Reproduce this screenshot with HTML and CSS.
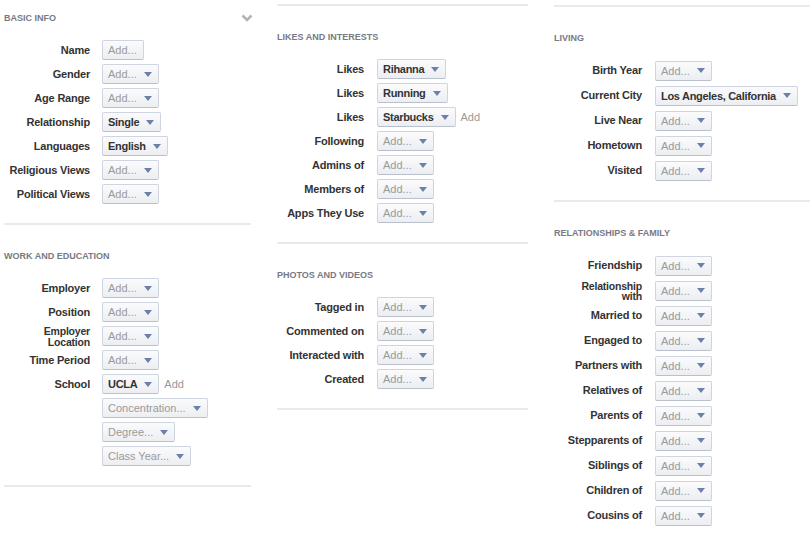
FILE: index.html
```html
<!DOCTYPE html>
<html lang="en">
<head>
    <meta charset="UTF-8">
    <title>Search Filters</title>
    <link rel="stylesheet" href="styles.css">
</head>
<body>
    <div class="columns">

        <!-- Column 1 -->
        <div class="column">
            <section class="section section--plain">
                <div class="section-title">
                    <span>Basic Info</span>
                    <svg class="chevron" width="12" height="8" viewBox="0 0 12 8"><polyline points="1.5,1.5 6,6 10.5,1.5" fill="none" stroke="#b4b4b4" stroke-width="2.6"/></svg>
                </div>
                <div class="row"><div class="label">Name</div><span class="btn"><span class="btn-text">Add...</span></span></div>
                <div class="row"><div class="label">Gender</div><span class="btn"><span class="btn-text">Add...</span><i class="arrow"></i></span></div>
                <div class="row"><div class="label">Age Range</div><span class="btn"><span class="btn-text">Add...</span><i class="arrow"></i></span></div>
                <div class="row"><div class="label">Relationship</div><span class="btn btn--set"><span class="btn-text">Single</span><i class="arrow"></i></span></div>
                <div class="row"><div class="label">Languages</div><span class="btn btn--set"><span class="btn-text">English</span><i class="arrow"></i></span></div>
                <div class="row"><div class="label">Religious Views</div><span class="btn"><span class="btn-text">Add...</span><i class="arrow"></i></span></div>
                <div class="row"><div class="label">Political Views</div><span class="btn"><span class="btn-text">Add...</span><i class="arrow"></i></span></div>
            </section>

            <section class="section">
                <div class="section-title"><span>Work and Education</span></div>
                <div class="row"><div class="label">Employer</div><span class="btn"><span class="btn-text">Add...</span><i class="arrow"></i></span></div>
                <div class="row"><div class="label">Position</div><span class="btn"><span class="btn-text">Add...</span><i class="arrow"></i></span></div>
                <div class="row"><div class="label label--two-line">Employer<br>Location</div><span class="btn"><span class="btn-text">Add...</span><i class="arrow"></i></span></div>
                <div class="row"><div class="label">Time Period</div><span class="btn"><span class="btn-text">Add...</span><i class="arrow"></i></span></div>
                <div class="row"><div class="label">School</div><span class="btn btn--set"><span class="btn-text">UCLA</span><i class="arrow"></i></span><a class="add-link">Add</a></div>
                <div class="row"><div class="label"></div><span class="btn"><span class="btn-text">Concentration...</span><i class="arrow"></i></span></div>
                <div class="row"><div class="label"></div><span class="btn"><span class="btn-text">Degree...</span><i class="arrow"></i></span></div>
                <div class="row"><div class="label"></div><span class="btn"><span class="btn-text">Class Year...</span><i class="arrow"></i></span></div>
            </section>
        </div>

        <!-- Column 2 -->
        <div class="column column--middle">
            <section class="section">
                <div class="section-title"><span>Likes and Interests</span></div>
                <div class="row"><div class="label">Likes</div><span class="btn btn--set"><span class="btn-text">Rihanna</span><i class="arrow"></i></span></div>
                <div class="row"><div class="label">Likes</div><span class="btn btn--set"><span class="btn-text">Running</span><i class="arrow"></i></span></div>
                <div class="row"><div class="label">Likes</div><span class="btn btn--set"><span class="btn-text">Starbucks</span><i class="arrow"></i></span><a class="add-link">Add</a></div>
                <div class="row"><div class="label">Following</div><span class="btn"><span class="btn-text">Add...</span><i class="arrow"></i></span></div>
                <div class="row"><div class="label">Admins of</div><span class="btn"><span class="btn-text">Add...</span><i class="arrow"></i></span></div>
                <div class="row"><div class="label">Members of</div><span class="btn"><span class="btn-text">Add...</span><i class="arrow"></i></span></div>
                <div class="row"><div class="label">Apps They Use</div><span class="btn"><span class="btn-text">Add...</span><i class="arrow"></i></span></div>
            </section>

            <section class="section">
                <div class="section-title"><span>Photos and Videos</span></div>
                <div class="row"><div class="label">Tagged in</div><span class="btn"><span class="btn-text">Add...</span><i class="arrow"></i></span></div>
                <div class="row"><div class="label">Commented on</div><span class="btn"><span class="btn-text">Add...</span><i class="arrow"></i></span></div>
                <div class="row"><div class="label">Interacted with</div><span class="btn"><span class="btn-text">Add...</span><i class="arrow"></i></span></div>
                <div class="row"><div class="label">Created</div><span class="btn"><span class="btn-text">Add...</span><i class="arrow"></i></span></div>
            </section>
        </div>

        <!-- Column 3 -->
        <div class="column column--roomy">
            <section class="section">
                <div class="section-title"><span>Living</span></div>
                <div class="row"><div class="label">Birth Year</div><span class="btn"><span class="btn-text">Add...</span><i class="arrow"></i></span></div>
                <div class="row"><div class="label">Current City</div><span class="btn btn--set"><span class="btn-text">Los Angeles, California</span><i class="arrow"></i></span></div>
                <div class="row"><div class="label">Live Near</div><span class="btn"><span class="btn-text">Add...</span><i class="arrow"></i></span></div>
                <div class="row"><div class="label">Hometown</div><span class="btn"><span class="btn-text">Add...</span><i class="arrow"></i></span></div>
                <div class="row"><div class="label">Visited</div><span class="btn"><span class="btn-text">Add...</span><i class="arrow"></i></span></div>
            </section>

            <section class="section">
                <div class="section-title"><span>Relationships &amp; Family</span></div>
                <div class="row"><div class="label">Friendship</div><span class="btn"><span class="btn-text">Add...</span><i class="arrow"></i></span></div>
                <div class="row"><div class="label label--two-line">Relationship<br>with</div><span class="btn"><span class="btn-text">Add...</span><i class="arrow"></i></span></div>
                <div class="row"><div class="label">Married to</div><span class="btn"><span class="btn-text">Add...</span><i class="arrow"></i></span></div>
                <div class="row"><div class="label">Engaged to</div><span class="btn"><span class="btn-text">Add...</span><i class="arrow"></i></span></div>
                <div class="row"><div class="label">Partners with</div><span class="btn"><span class="btn-text">Add...</span><i class="arrow"></i></span></div>
                <div class="row"><div class="label">Relatives of</div><span class="btn"><span class="btn-text">Add...</span><i class="arrow"></i></span></div>
                <div class="row"><div class="label">Parents of</div><span class="btn"><span class="btn-text">Add...</span><i class="arrow"></i></span></div>
                <div class="row"><div class="label">Stepparents of</div><span class="btn"><span class="btn-text">Add...</span><i class="arrow"></i></span></div>
                <div class="row"><div class="label">Siblings of</div><span class="btn"><span class="btn-text">Add...</span><i class="arrow"></i></span></div>
                <div class="row"><div class="label">Children of</div><span class="btn"><span class="btn-text">Add...</span><i class="arrow"></i></span></div>
                <div class="row"><div class="label">Cousins of</div><span class="btn"><span class="btn-text">Add...</span><i class="arrow"></i></span></div>
            </section>
        </div>

    </div>
</body>
</html>
```

FILE: styles.css
```css
html, body {
    overflow: hidden;
}

body {
    margin: 0;
    padding: 0;
    background-color: #fff;
    font-family: "Liberation Sans", Arial, sans-serif;
    font-size: 11px;
    color: #333;
}

.columns {
    display: grid;
    grid-template-columns: 247px 251px 256px;
    column-gap: 26px;
    align-items: start;
    padding: 4px 0 0 4px;
}

.column {
    border-bottom: 2px solid #e9eaed;
}

.column--roomy {
    margin-top: 1px;
}

.section {
    border-top: 2px solid #e9eaed;
    padding: 25px 0 17px;
}

.section--plain {
    border-top: none;
    padding-top: 8px;
}

.section-title {
    display: flex;
    justify-content: space-between;
    align-items: center;
    height: 12px;
    margin-bottom: 14px;
    font-size: 9px;
    font-weight: bold;
    text-transform: uppercase;
    color: #777a84;
}

.chevron {
    margin-right: -2px;
}

.row {
    display: flex;
    align-items: center;
    height: 24px;
}

.column--roomy .row {
    height: 25px;
}

.label {
    width: 86px;
    flex-shrink: 0;
    margin-right: 12px;
    text-align: right;
    font-weight: bold;
    line-height: 13px;
    letter-spacing: -0.2px;
    color: #333;
}

.label--two-line {
    font-size: 10.5px;
    line-height: 10.5px;
    margin-top: 1px;
}

.column--middle .label {
    width: 87px;
    margin-right: 13px;
}

.column--roomy .label {
    width: 88px;
    margin-right: 13px;
}

.btn {
    display: inline-flex;
    align-items: center;
    box-sizing: border-box;
    height: 20px;
    padding: 0 6px 0 5px;
    border: 1px solid #cfd5e0;
    border-bottom-color: #b9c1ce;
    border-radius: 2px;
    background: linear-gradient(#fbfbfc, #eceef2);
    color: #9a9a9a;
    white-space: nowrap;
}

.btn:first-child {
    padding-right: 5px;
}

.btn-text {
    line-height: 18px;
}

.btn--set {
    color: #333;
    font-weight: bold;
    letter-spacing: -0.3px;
}

.arrow {
    width: 0;
    height: 0;
    margin-left: 7px;
    border-left: 4px solid transparent;
    border-right: 4px solid transparent;
    border-top: 5px solid #6c80a9;
}

.add-link {
    margin-left: 5px;
    color: #999;
}
```
